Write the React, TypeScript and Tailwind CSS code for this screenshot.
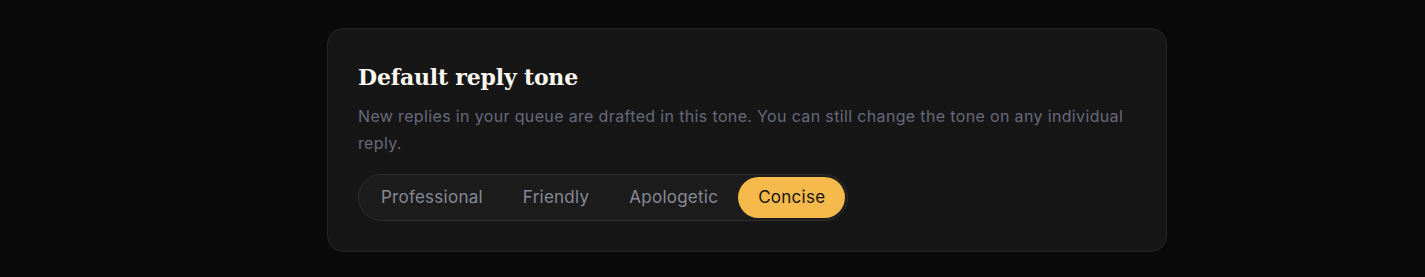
import { useState } from "react";

const tones = ["Professional", "Friendly", "Apologetic", "Concise"];

export default function App() {
  const [tone, setTone] = useState("Concise");

  return (
    <div className="min-h-[277px] w-full bg-[#0a0a0a] pl-[327px] pt-[28px]">
      <section className="w-[840px] rounded-2xl border border-[#262626] bg-[#161616] px-[30px] pb-[30px] pt-[32px]">
        <h2 className="font-['DejaVu_Serif',serif] text-[22px] font-bold leading-[32px] tracking-[-0.2px] text-[#fbf8f0]">
          Default reply tone
        </h2>
        <p className="mt-[10px] font-['Inter',sans-serif] text-[16px] leading-[27px] tracking-[0.35px] text-[#666a7c]">
          New replies in your queue are drafted in this tone. You can still change the tone on any individual reply.
        </p>
        <div className="mt-[17px] inline-flex rounded-full border border-[#2d2d2d] bg-[#1c1c1c] p-[2px]">
          {tones.map((t) => (
            <button
              key={t}
              onClick={() => setTone(t)}
              className={
                t === tone
                  ? "h-[41px] rounded-full bg-[#f6b94b] px-5 font-['Inter',sans-serif] text-[17px] tracking-[0.25px] text-[#141414]"
                  : "h-[41px] rounded-full px-5 font-['Inter',sans-serif] text-[17px] tracking-[0.25px] text-[#868a96]"
              }
            >
              {t}
            </button>
          ))}
        </div>
      </section>
    </div>
  );
}
